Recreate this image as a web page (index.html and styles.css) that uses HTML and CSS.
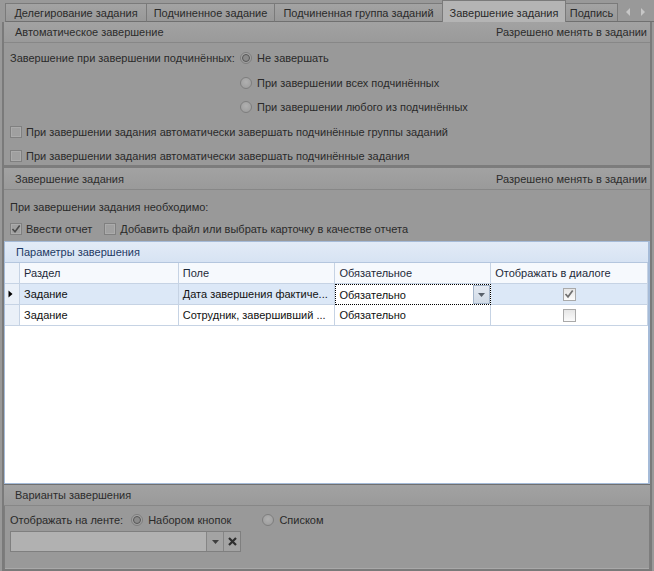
FILE: index.html
```html
<!DOCTYPE html>
<html lang="ru">
<head>
<meta charset="utf-8">
<link rel="stylesheet" href="styles.css">
</head>
<body>
<div class="tabs">
  <div class="tab t1">Делегирование задания</div>
  <div class="tab t2">Подчиненное задание</div>
  <div class="tab t3">Подчиненная группа заданий</div>
  <div class="tab t4 active">Завершение задания</div>
  <div class="tab t5">Подпись</div>
  <div class="tabfill">
    <svg class="arr" width="5" height="8" viewBox="0 0 5 8"><path d="M4 0 L0 4 L4 8 Z" fill="#c6c6c6"/></svg>
    <svg class="arr" width="5" height="8" viewBox="0 0 5 8"><path d="M1 0 L5 4 L1 8 Z" fill="#c6c6c6"/></svg>
  </div>
</div>
<div class="page">
  <section class="grp g1">
    <div class="ghead"><span>Автоматическое завершение</span><span>Разрешено менять в задании</span></div>
    <div class="g1body">
      <div class="lbl">Завершение при завершении подчинённых:</div>
      <div class="opt"><span class="radio on"></span>Не завершать</div>
      <div class="opt c2"><span class="radio"></span>При завершении всех подчинённых</div>
      <div class="opt c2"><span class="radio"></span>При завершении любого из подчинённых</div>
      <div class="opt full"><span class="cb"></span>При завершении задания автоматически завершать подчинённые группы заданий</div>
      <div class="opt full"><span class="cb"></span>При завершении задания автоматически завершать подчинённые задания</div>
    </div>
  </section>
  <section class="grp g2">
    <div class="ghead"><span>Завершение задания</span><span>Разрешено менять в задании</span></div>
    <div class="g2body">
      <div class="line">При завершении задания необходимо:</div>
      <div class="line">
        <span class="opt"><span class="cb on"><svg width="10" height="10" viewBox="0 0 10 10"><path d="M1.5 5 L4 7.8 L8.7 1.5" fill="none" stroke="#4b4b4b" stroke-width="1.6"/></svg></span>Ввести отчет</span>
        <span class="opt sp"><span class="cb"></span>Добавить файл или выбрать карточку в качестве отчета</span>
      </div>
    </div>
  </section>
  <section class="bgrp">
    <div class="bhead">Параметры завершения</div>
    <div class="grid">
      <div class="row hdr">
        <div class="ind"></div>
        <div class="cell c-a">Раздел</div>
        <div class="cell c-b">Поле</div>
        <div class="cell c-c">Обязательное</div>
        <div class="cell c-d">Отображать в диалоге</div>
      </div>
      <div class="row sel">
        <div class="ind"><svg width="5" height="8" viewBox="0 0 5 8"><path d="M0.5 0.5 L4.5 4 L0.5 7.5 Z" fill="#000"/></svg></div>
        <div class="cell c-a">Задание</div>
        <div class="cell c-b">Дата завершения фактиче...</div>
        <div class="cell c-c edit"><span class="etext">Обязательно</span><span class="ebtn"><svg width="7" height="4" viewBox="0 0 7 4"><path d="M0 0 H7 L3.5 4 Z" fill="#58606a"/></svg></span></div>
        <div class="cell c-d center"><span class="gcb"><svg width="10" height="10" viewBox="0 0 10 10"><path d="M1.5 5 L4 7.8 L8.7 1.5" fill="none" stroke="#707070" stroke-width="1.7"/></svg></span></div>
      </div>
      <div class="row">
        <div class="ind"></div>
        <div class="cell c-a">Задание</div>
        <div class="cell c-b">Сотрудник, завершивший ...</div>
        <div class="cell c-c">Обязательно</div>
        <div class="cell c-d center"><span class="gcb"></span></div>
      </div>
    </div>
  </section>
  <section class="grp g3">
    <div class="ghead"><span>Варианты завершения</span></div>
    <div class="g3body">
      <div class="line">
        <span class="lbl3">Отображать на ленте:</span>
        <span class="opt"><span class="radio on"></span>Набором кнопок</span>
        <span class="opt r2"><span class="radio"></span>Списком</span>
      </div>
      <div class="combo">
        <span class="cinput"></span>
        <span class="cbtn"><svg width="7" height="4" viewBox="0 0 7 4"><path d="M0 0 H7 L3.5 4 Z" fill="#3e3e3e"/></svg></span>
        <span class="cbtn x"><svg width="9" height="9" viewBox="0 0 9 9"><path d="M1 1 L8 8 M8 1 L1 8" stroke="#2e2e2e" stroke-width="2.2"/></svg></span>
      </div>
    </div>
  </section>
</div>
</body>
</html>
```
FILE: styles.css
```css
* { box-sizing: border-box; }
html, body { margin: 0; padding: 0; }
body {
  width: 654px;
  height: 571px;
  overflow: hidden;
  background: #999999;
  font: 11px "Liberation Sans", Arial, sans-serif;
  color: #2a2a2a;
}

/* tabs */
.tabs {
  display: flex;
  align-items: flex-end;
  height: 22px;
  padding-left: 5px;
}
.tab {
  height: 19px;
  line-height: 18px;
  padding: 0;
  text-align: center;
  border: 1px solid #7a7a7a;
  border-bottom: 1px solid #707070;
  margin-right: -1px;
  background: linear-gradient(#a3a3a3, #989898);
  white-space: nowrap;
  overflow: hidden;
  flex: none;
}
.t1 { width: 142px; }
.t2 { width: 129px; }
.t3 { width: 169px; }
.t4 { width: 124px; }
.t5 { width: 53px; }
.tab.active {
  height: 22px;
  padding-top: 3px;
  border-bottom: none;
  background: #b4b4b4;
  position: relative;
  z-index: 1;
}
.tabfill {
  flex: 1;
  height: 19px;
  border-bottom: 1px solid #707070;
  display: flex;
  align-items: center;
  justify-content: flex-end;
  gap: 9px;
  padding-right: 9px;
}
.arr { display: block; }

/* page */
.page {
  margin: 0 2px;
  height: 549px;
  border-left: 2px solid #7a7a7a;
  border-right: 2px solid #7a7a7a;
  display: flex;
  flex-direction: column;
}
.ghead {
  height: 20px;
  display: flex;
  justify-content: space-between;
  align-items: center;
  padding: 0 3px 0 11px;
  border-bottom: 1px solid #878787;
  background: linear-gradient(#a2a2a2, #9a9a9a);
  color: #2c2c2c;
}
.g1 .ghead { height: 21px; }

.g1body {
  height: 122px;
  overflow: hidden;
  padding: 3px 0 0 6px;
  display: grid;
  grid-template-columns: 230px 1fr;
  grid-auto-rows: 24.5px;
  align-items: center;
}
.c2 { grid-column: 2; }
.full { grid-column: 1 / span 2; }
.opt {
  display: inline-flex;
  align-items: center;
  white-space: nowrap;
}
.radio {
  width: 12px;
  height: 12px;
  border-radius: 50%;
  border: 1px solid #7e7e7e;
  background: radial-gradient(circle at 50% 40%, #b0b0b0, #9a9a9a);
  margin-right: 5px;
  display: inline-flex;
  align-items: center;
  justify-content: center;
  flex: none;
}
.radio.on::after {
  content: "";
  width: 6px;
  height: 6px;
  border-radius: 50%;
  background: #8b8b8b;
  border: 1.5px solid #555;
}
.cb {
  width: 12px;
  height: 12px;
  border: 1px solid #808080;
  background: #a0a0a0;
  box-shadow: inset 0 0 0 1px #ababab;
  margin-right: 4px;
  display: inline-flex;
  align-items: center;
  justify-content: center;
  flex: none;
}
.cb svg { display: block; }

.g2 { border-top: 3px solid #7c7c7c; }
.g2 .ghead { height: 22px; }
.g2body {
  height: 51px;
  padding: 6px 0 0 6px;
}
.line {
  height: 22px;
  display: flex;
  align-items: center;
}
.sp { margin-left: 12px; }

/* blue group */
.bgrp {
  flex: 1;
  border: 1px solid #a5bbd8;
  border-right: 2px solid #a5bbd8;
  background: #fff;
  color: #111;
  display: flex;
  flex-direction: column;
}
.bhead {
  height: 21px;
  line-height: 20px;
  padding-left: 11px;
  border-bottom: 1px solid #b4c6de;
  background: linear-gradient(#e2ebf7, #d7e3f3);
  color: #1e3a64;
}
.grid { flex: 1; background: #fff; }
.row {
  display: flex;
  height: 21px;
}
.ind {
  width: 15px;
  border-right: 1px solid #c6d3e4;
  border-bottom: 1px solid #c6d3e4;
  background: #eaf0f8;
  display: flex;
  align-items: center;
  justify-content: center;
}
.ind svg { display: block; margin-left: -2px; }
.cell {
  border-right: 1px solid #c6d3e4;
  border-bottom: 1px solid #c6d3e4;
  padding-left: 4px;
  display: flex;
  align-items: center;
  white-space: nowrap;
  overflow: hidden;
}
.hdr .cell { background: #f6f9fd; color: #1e2a3a; }
.hdr .ind { background: #eef3fa; }
.c-a { width: 159px; }
.c-b { width: 157px; }
.c-c { width: 156px; }
.c-d { width: 157px; }
.sel .cell { background: #dce8f7; }
.sel .cell.edit {
  background: #fff;
  border: 1px dotted #000;
  padding: 0 0 0 3px;
  justify-content: space-between;
  align-items: stretch;
}
.etext { display: flex; align-items: center; }
.ebtn {
  width: 17px;
  border: 1px solid #a4b5ca;
  background: linear-gradient(#e4eaf2, #d0dae6);
  display: flex;
  align-items: center;
  justify-content: center;
}
.center { justify-content: center; padding-left: 0; }
.gcb {
  width: 13px;
  height: 13px;
  border: 1px solid #a9a9a9;
  background: linear-gradient(#e6e6e6, #fbfbfb);
  display: flex;
  align-items: center;
  justify-content: center;
}
.gcb svg { display: block; }

/* group 3 */
.g3 {
  height: 87px;
  border-top: 1px solid #707070;
  border-bottom: 2px solid #7a7a7a;
  box-shadow: inset 1px 0 0 #7d7d7d, inset -1px 0 0 #7d7d7d, inset 0 -1px 0 #a9a9a9;
}
.g3 .ghead { height: 21px; }
.g3body { padding: 3px 0 0 6px; }
.lbl3 { margin-right: 8px; }
.r2 { margin-left: 31px; }
.combo {
  margin-top: 0;
  display: flex;
  width: 231px;
  height: 21px;
  border: 1px solid #7f7f7f;
}
.cinput { flex: 1; background: #b1b1b1; }
.cbtn {
  width: 17px;
  border-left: 1px solid #858585;
  background: #a3a3a3;
  display: flex;
  align-items: center;
  justify-content: center;
}
```
